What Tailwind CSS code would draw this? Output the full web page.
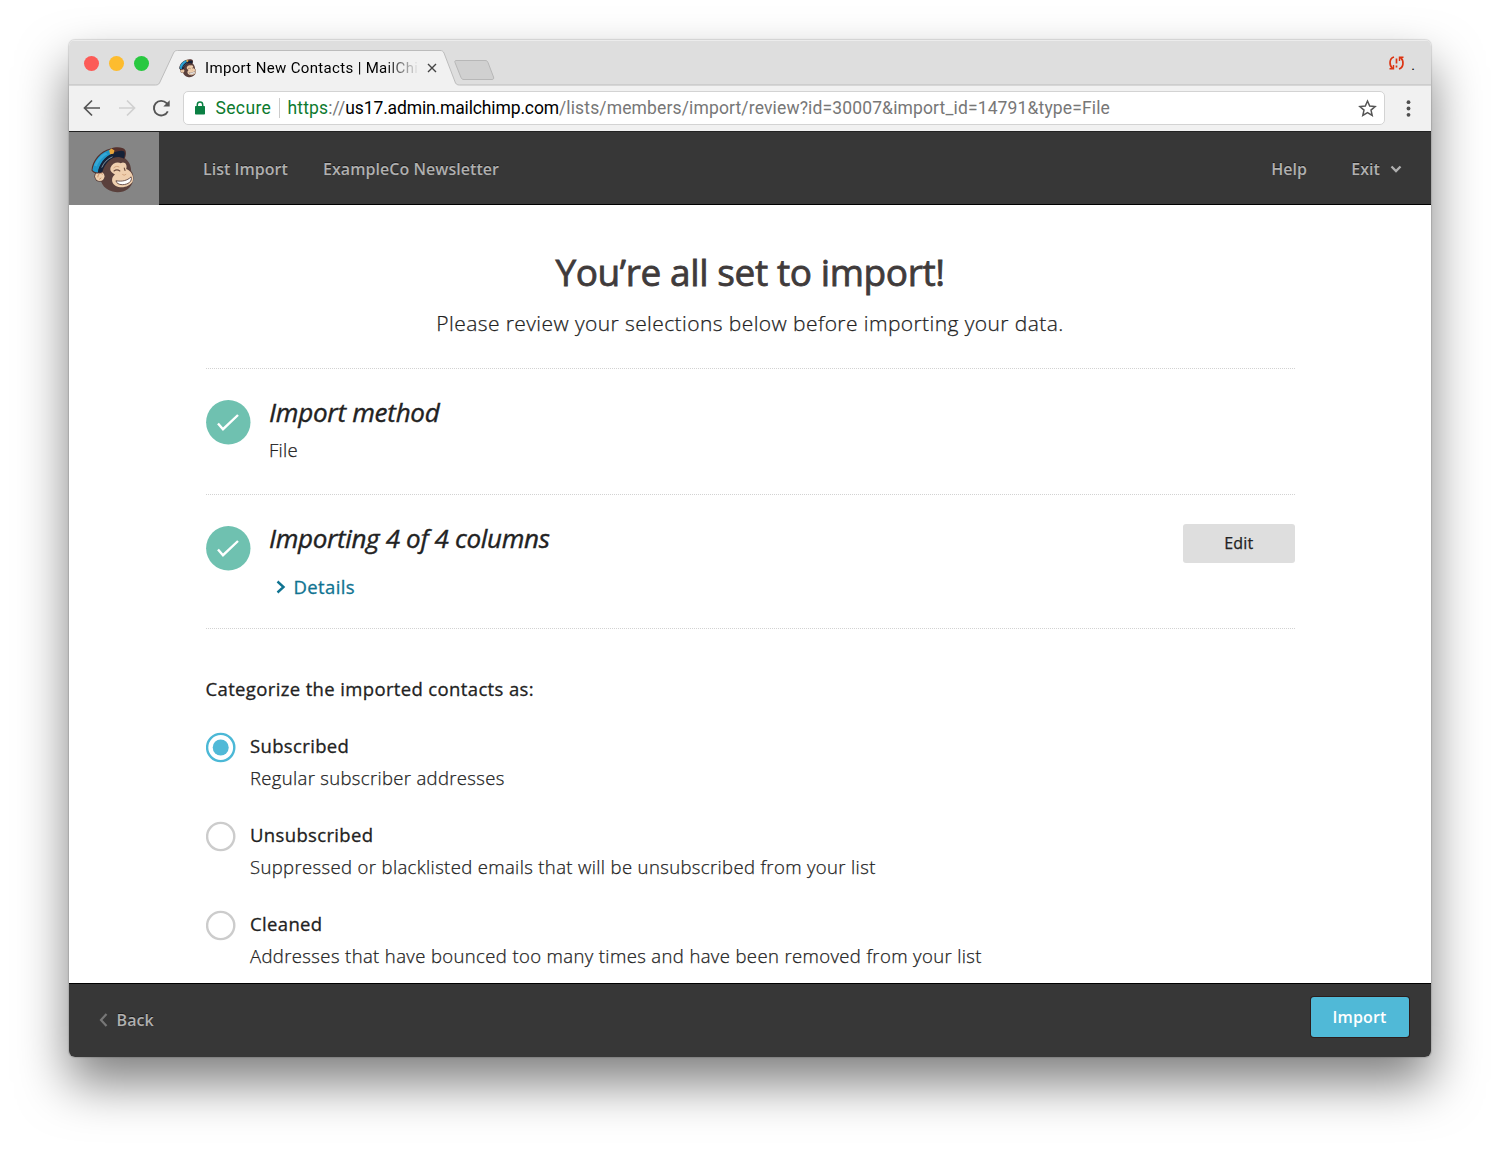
<!DOCTYPE html>
<html lang="en">
<head>
<meta charset="utf-8">
<title>Import New Contacts | MailChimp</title>
<script src="https://cdn.jsdelivr.net/npm/@tailwindcss/browser@4"></script>
</head>
<body class="bg-white font-['Open_Sans',sans-serif] text-[#222] w-[1500px] h-[1156px] overflow-hidden">
<svg width="0" height="0" class="absolute">
  <symbol id="chimp" viewBox="0 0 46 48">
    <path d="M9 24C8 34 12 43 22 45.500c10 2.500 19-2 21-11 .8-4 0-8-2-10 0-8-5-15-14-15C17 9.500 10 14 9 24Z" fill="#5a403c"/>
    <path d="M20 21c1.500-4.500 7-6.500 10.500-4.500 4-2 7 1.500 5.500 6 5 2 8.500 7 6.500 13-3.500 5-11 7.500-17.500 4-4.500-3-4.500-8.500-.5-11.500-3.500-2-5.500-3.500-4.500-7Z" fill="#efcfae"/>
    <circle cx="9" cy="30" r="5.600" fill="#5a403c"/>
    <circle cx="9" cy="30" r="4.800" fill="#efcfae"/>
    <path d="M7 31c0-4 3-5 5-3M8.500 33l2-1.500" fill="none" stroke="#c08d69" stroke-width="1"/>
    <path d="M.5 24C1 14 9 4 20 1.500c5-2 13-2 15 1.500 1.500 3 .5 7-1 9.500C27 7 15 12 11.500 26c-4 1.500-9 1.500-11-2Z" fill="#54312d"/>
    <path d="M1.500 23.500C3 14 10 5 20 2.500c2 0 3 2 2 4C15 10 9 16 7 26c-2.500 0-4.500-1-5.500-2.500Z" fill="#2096c8"/>
    <path d="M3 19c2-6 7-11 12-13.500l2 2C12 10 8 14 6 20Z" fill="#35a8d6"/>
    <path d="M7 26C8.500 17 14 9.500 22 6.500c4-2 9-3.500 12-2 1 2 .5 5-.5 7.200C25 7 15 13 11.500 25.500c-1.500.5-3 .7-4.500.5Z" fill="#152238"/>
    <path d="M11 21c2-5 6-9 11-11" fill="none" stroke="#8fa0aa" stroke-width=".9"/>
    <path d="m18.500 3.500 2.500-2 3 2-1 3.500-3.500.5Z" fill="#e6a53b"/>
    <path d="M23.500 24.500c2-1.500 4-1.500 6 0M34 21.500l.8 2.500" fill="none" stroke="#6a4a3c" stroke-width="1.100" stroke-linecap="round"/>
    <path d="M23 21.500c2-2 4-2 6-1M32 28l2 .8 2-1" fill="none" stroke="#c9976f" stroke-width=".8"/>
    <path d="M25.500 34.500c6 1 11.500 0 15.500-4 1.500 4.500-3 8-9 8-3.500 0-6-1.500-6.500-4Z" fill="#fff" stroke="#5a403c" stroke-width=".9"/>
  </symbol>
</svg>

<div class="ml-[69px] mt-[40px] w-[1362px] h-[1017px] flex flex-col overflow-hidden rounded-[6px] bg-white shadow-[0_0_1px_1px_rgba(0,0,0,0.12),0_26px_50px_rgba(0,0,0,0.5)]">

  <!-- tab strip -->
  <div class="relative h-[45px] shrink-0 bg-[#dedede] border-t border-[#ececec] flex items-center font-['Roboto',sans-serif]">
    <svg class="absolute left-0 top-[-1px]" width="1362" height="46" viewBox="0 0 1362 46" fill="none">
      <path d="M0 45H86.500c2 0 3-.5 4-2L104.500 13c1-2 2-2.500 4-2.500H371c2 0 3 .5 4 2.500L386.500 43c1 1.500 2 2 4 2H1362V46H0Z" fill="#f1f1f1"/>
      <path d="M0 45H86.500c2 0 3-.5 4-2L104.500 13c1-2 2-2.500 4-2.500H371c2 0 3 .5 4 2.500L386.500 43c1 1.500 2 2 4 2H1362" stroke="#bcbcbc"/>
      <path d="M387 20.500h29c1.500 0 2.500.5 3 2l5.500 14.500c.5 1.500 0 2.500-1.500 2.500H395c-1.500 0-2.500-.5-3-2l-6-15c-.5-1.200 0-2 1-2Z" fill="#d0d0d0" stroke="#b7b7b7"/>
    </svg>
    <div class="relative flex items-center gap-[10px] pl-[15px] pt-[1px]">
      <i class="size-[15px] rounded-full bg-[#fc5b57]"></i>
      <i class="size-[15px] rounded-full bg-[#fdbc2e]"></i>
      <i class="size-[15px] rounded-full bg-[#28c840]"></i>
    </div>
    <svg class="relative ml-[30px] mt-[10px]" width="18" height="19"><use href="#chimp"/></svg>
    <span class="relative ml-[8px] mt-[9px] w-[214px] overflow-hidden whitespace-nowrap text-[15px] leading-[20px] tracking-[0.340px] bg-linear-to-r from-black from-84% to-transparent bg-clip-text text-transparent">Import New Contacts | MailChimp</span>
    <svg class="relative ml-[8px] mt-[10px]" width="10" height="10" viewBox="0 0 10 10" stroke="#444" stroke-width="1.400"><path d="m1 1 8 8M9 1 1 9"/></svg>
    <svg class="relative ml-auto" width="17" height="16" viewBox="0 0 17 16" fill="none" stroke="#dc3412" stroke-width="1.700">
      <path d="M6 2C1 3.500 1 10.500 4.500 13.500M11 14c5-1.500 5-8.500 1.500-11.500"/><path d="M1.500 13.800h4V10M15.500 2.200h-4V6" stroke-width="1.400"/><path d="M8.500 3.500v5M8.500 10.500v2"/>
    </svg>
    <span class="relative ml-[6px] mr-[16px] text-[14px] leading-[20px] text-black pt-[3px]">.</span>
  </div>

  <!-- toolbar -->
  <div class="h-[46px] shrink-0 bg-[#f1f1f1] flex items-center font-['Roboto',sans-serif] text-[17.500px]">
    <svg class="ml-[13.500px]" width="18" height="18" viewBox="0 0 18 18" fill="none" stroke="#555" stroke-width="1.700"><path d="M17 9H2M9 1.500 1.500 9 9 16.500"/></svg>
    <svg class="ml-[17px]" width="18" height="18" viewBox="0 0 18 18" fill="none" stroke="#d0d0d0" stroke-width="1.700"><path d="M1 9h15M9 1.500 16.500 9 9 16.500"/></svg>
    <svg class="ml-[16px]" width="19" height="19" viewBox="0 0 19 19" fill="none" stroke="#555" stroke-width="1.900"><path d="M15.800 12.300A7.300 7.300 0 1 1 14.600 4.200L16 5.800"/><path d="M17.700 1.200v6.400h-6.400Z" fill="#555" stroke="none"/></svg>
    <div class="ml-[12.500px] w-[1202px] h-[34px] rounded-[5px] border border-[#d3d3d3] bg-white flex items-center">
      <svg class="ml-[10px]" width="12" height="14" viewBox="0 0 12 14"><rect x="1" y="5" width="10" height="8.500" rx=".8" fill="#0b8043"/><path d="M3.300 6V3.800a2.700 2.700 0 0 1 5.400 0V6" fill="none" stroke="#0b8043" stroke-width="1.500"/></svg>
      <span class="ml-[9.500px] mt-px w-[63px] tracking-[0.350px] text-[#0d7a2f]">Secure</span>
      <i class="w-px h-[20px] bg-[#ccc]"></i>
      <span class="ml-[8px] mt-px whitespace-nowrap tracking-[0.140px] text-[#777]"><span class="text-[#0d7a2f]">https</span>://<span class="text-black tracking-[-0.140px]">us17.admin.mailchimp.com</span>/lists/members/import/review?id=30007&amp;import_id=14791&amp;type=File</span>
      <svg class="ml-auto mr-[7.500px]" width="19" height="18" viewBox="0 0 19 18" fill="none" stroke="#555" stroke-width="1.500"><path d="m9.500 2 2.200 5 5.400.5-4.100 3.600 1.200 5.300-4.700-2.800-4.700 2.800L6 11.100 1.900 7.500l5.400-.5Z"/></svg>
    </div>
    <svg class="ml-[20.500px]" width="5" height="17" viewBox="0 0 5 17" fill="#4f4f4f"><circle cx="2.500" cy="2.200" r="1.900"/><circle cx="2.500" cy="8.500" r="1.900"/><circle cx="2.500" cy="14.800" r="1.900"/></svg>
  </div>

  <!-- app header -->
  <header class="h-[74px] shrink-0 bg-[#373737] border-t border-t-[#222] shadow-[inset_0_-1px_0_#000] flex items-center text-[16px] font-semibold text-[#b0b0b0] [text-shadow:0_-1px_0_#1a1a1a]">
    <div class="w-[89.500px] h-[73px] bg-[#858585] flex items-center justify-center"><svg class="mt-[4px]" width="45" height="47"><use href="#chimp"/></svg></div>
    <span class="ml-[44.500px] w-[120px] tracking-[0.030px]">List Import</span>
    <span class="tracking-[0.050px]">ExampleCo Newsletter</span>
    <span class="ml-auto w-[80px] tracking-[0.050px]">Help</span>
    <span class="tracking-[0.050px]">Exit</span>
    <svg class="ml-[10px] mr-[29px] mt-px" width="12" height="8" viewBox="0 0 12 8" fill="none" stroke="#b0b0b0" stroke-width="2.300"><path d="m1.500 1.500 4.500 4.500 4.500-4.500"/></svg>
  </header>

  <main class="h-[777.500px] shrink-0 overflow-hidden pl-[136.500px] pr-[136.500px] pt-[42px] text-[18.500px] whitespace-nowrap">
    <h1 class="h-[50px] leading-[50px] text-center text-[37px] font-normal tracking-[-0.400px] text-[#403b3b] [-webkit-text-stroke:0.8px_#403b3b]">You’re all set to import!</h1>
    <p class="mt-[12px] h-[28px] leading-[28px] text-center text-[21px] font-light tracking-[0.415px] [-webkit-text-stroke:0.25px_#222]">Please review your selections below before importing your data.</p>

    <section class="mt-[31px] h-[126px] border-t border-dotted border-[#d2d2d2] flex pt-[28px]">
      <svg class="mt-[3px] shrink-0" width="45" height="45" viewBox="0.5 0 45 45"><circle cx="22.800" cy="22.300" r="22.200" fill="#6fc1b0"/><path d="m12.500 23.500 5 5.700L32.500 15" fill="none" stroke="#fff" stroke-width="2.400"/></svg>
      <div class="ml-[18.500px]">
        <h2 class="h-[30px] leading-[30px] text-[26px] italic tracking-[-0.250px] [-webkit-text-stroke:0.4px_#222]">Import method</h2>
        <p class="mt-[10.500px] h-[24px] leading-[24px] font-light tracking-[0.300px] [-webkit-text-stroke:0.25px_#222]">File</p>
      </div>
    </section>

    <section class="h-[134.500px] border-y border-dotted border-[#d2d2d2] flex pt-[28px]">
      <svg class="mt-[3px] shrink-0" width="45" height="45" viewBox="0.5 0 45 45"><circle cx="22.800" cy="22.300" r="22.200" fill="#6fc1b0"/><path d="m12.500 23.500 5 5.700L32.500 15" fill="none" stroke="#fff" stroke-width="2.400"/></svg>
      <div class="ml-[18.500px]">
        <h2 class="h-[30px] leading-[30px] text-[26px] italic tracking-[-0.330px] [-webkit-text-stroke:0.4px_#222]">Importing 4 of 4 columns</h2>
        <a class="mt-[22px] ml-[6.500px] h-[24px] leading-[24px] flex items-center text-[#0f7391] tracking-[0.370px] [-webkit-text-stroke:0.3px_#0f7391]"><svg class="mr-[8px]" width="10" height="14" viewBox="0 0 10 14" fill="none" stroke="#0f7391" stroke-width="2.400"><path d="m1.500 1.500 6 5.500-6 5.500"/></svg>Details</a>
      </div>
      <button class="ml-auto mt-[0.500px] w-[111.500px] h-[39.500px] rounded-[3px] bg-[#dedede] text-[16px] tracking-[0.200px] [-webkit-text-stroke:0.25px_#222]">Edit</button>
    </section>

    <div class="mt-[47px] h-[26px] leading-[26px] tracking-[0.360px] [-webkit-text-stroke:0.3px_#222]">Categorize the imported contacts as:</div>

    <div class="mt-[31px] flex flex-col gap-[31px]">
      <div class="flex h-[58px]">
        <svg class="shrink-0 -mt-px" width="30" height="31" viewBox="0.3 0 30 31"><circle cx="15" cy="15.500" r="13.600" fill="#fff" stroke="#4bb8d6" stroke-width="2.400"/><circle cx="15" cy="15.500" r="8" fill="#50b9d7"/></svg>
        <div class="ml-[14.500px]"><div class="h-[26px] leading-[26px] tracking-[0.350px] [-webkit-text-stroke:0.3px_#222]">Subscribed</div><p class="mt-[6px] h-[26px] leading-[26px] font-light tracking-[0.330px] [-webkit-text-stroke:0.25px_#222]">Regular subscriber addresses</p></div>
      </div>
      <div class="flex h-[58px]">
        <svg class="shrink-0 -mt-px" width="30" height="31" viewBox="0.3 0 30 31"><circle cx="15" cy="15.500" r="13.600" fill="#fff" stroke="#ccc" stroke-width="2.400"/></svg>
        <div class="ml-[14.500px]"><div class="h-[26px] leading-[26px] tracking-[0.350px] [-webkit-text-stroke:0.3px_#222]">Unsubscribed</div><p class="mt-[6px] h-[26px] leading-[26px] font-light tracking-[0.360px] [-webkit-text-stroke:0.25px_#222]">Suppressed or blacklisted emails that will be unsubscribed from your list</p></div>
      </div>
      <div class="flex h-[58px]">
        <svg class="shrink-0 -mt-px" width="30" height="31" viewBox="0.3 0 30 31"><circle cx="15" cy="15.500" r="13.600" fill="#fff" stroke="#ccc" stroke-width="2.400"/></svg>
        <div class="ml-[14.500px]"><div class="h-[26px] leading-[26px] tracking-[0.350px] [-webkit-text-stroke:0.3px_#222]">Cleaned</div><p class="mt-[6px] h-[26px] leading-[26px] font-light tracking-[0.375px] [-webkit-text-stroke:0.25px_#222]">Addresses that have bounced too many times and have been removed from your list</p></div>
      </div>
    </div>
  </main>

  <footer class="h-[74.500px] shrink-0 bg-[#373737] border-t border-black flex items-start text-[16px]">
    <svg class="ml-[30px] mt-[29.500px]" width="9" height="14" viewBox="0 0 9 14" fill="none" stroke="#777" stroke-width="2.200"><path d="m7.500 1-5.500 6 5.500 6"/></svg>
    <span class="ml-[8.500px] mt-[24.500px] leading-[24px] font-semibold tracking-[0.100px] text-[#b0b0b0] [text-shadow:0_-1px_0_#1a1a1a]">Back</span>
    <button class="ml-auto mr-[22.500px] mt-[13.500px] w-[98px] h-[40px] rounded-[3px] bg-[#50b9d7] text-white font-semibold tracking-[0.150px] shadow-[0_0_0_1px_#2b1d1c]">Import</button>
  </footer>
</div>
</body>
</html>
